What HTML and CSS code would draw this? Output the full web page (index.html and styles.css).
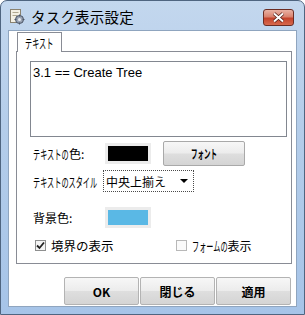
FILE: index.html
```html
<!DOCTYPE html>
<html lang="ja">
<head>
    <meta charset="UTF-8">
    <title>タスク表示設定</title>
    <link rel="stylesheet" href="styles.css">
</head>
<body>

<div class="window">
    <div class="titlebar">
        <svg class="app-icon" width="16" height="16" viewBox="0 0 16 16">
            <rect x="1.5" y="0.5" width="10" height="13" fill="#f4f0e4" stroke="#8a8270"/>
            <line x1="3.5" y1="3.5" x2="9.5" y2="3.5" stroke="#b0a890"/>
            <line x1="3.5" y1="6.5" x2="8.5" y2="6.5" stroke="#b0a890"/>
            <circle cx="10.5" cy="10.5" r="4" fill="#9aa4b4" stroke="#4a5466"/>
            <circle cx="10.5" cy="10.5" r="1.5" fill="#e8ecf2"/>
            <path d="M10.5 5.5v2M10.5 13.5v2M5.5 10.5h2M13.5 10.5h2" stroke="#4a5466"/>
        </svg>
        <span class="title">タスク表示設定</span>
        <div class="close-btn">
            <svg width="13" height="11" viewBox="0 0 13 11">
                <path d="M2 1.5L11 9.5M11 1.5L2 9.5" stroke="#4a1a14" stroke-width="3.4"/>
                <path d="M2 1.5L11 9.5M11 1.5L2 9.5" stroke="#fff" stroke-width="2"/>
            </svg>
        </div>
    </div>

    <div class="client">
        <div class="tabs">
            <div class="tab"><span class="hw hw4">テキスト</span></div>
        </div>
        <div class="panel">
            <div class="textbox">3.1 == Create Tree</div>

            <div class="row row-color">
                <span class="label"><span class="hw hw5">テキストの</span>色:</span>
                <span class="swatch swatch-black"></span>
                <button class="btn btn-font"><span class="hw hw-font">フォント</span></button>
            </div>

            <div class="row row-style">
                <span class="label label-style"><span class="hw hw9">テキストのスタイル</span></span>
                <div class="combo">
                    <span>中央上揃え</span>
                    <span class="arrow"></span>
                </div>
            </div>

            <div class="row row-bg">
                <span class="label">背景色:</span>
                <span class="swatch swatch-blue"></span>
            </div>

            <div class="row row-checks">
                <label class="check">
                    <span class="box">
                        <svg width="9" height="9" viewBox="0 0 9 9"><path d="M1 4.5L3.5 7L8 1.5" fill="none" stroke="#222" stroke-width="1.8"/></svg>
                    </span>
                    境界の表示
                </label>
                <label class="check check-form">
                    <span class="box box-empty"></span>
                    <span class="hw hw5">フォームの</span>表示
                </label>
            </div>
        </div>

        <div class="buttons">
            <button class="btn btn-main">OK</button>
            <button class="btn btn-main">閉じる</button>
            <button class="btn btn-main">適用</button>
        </div>
    </div>
</div>

</body>
</html>
```

FILE: styles.css
```css
body {
    margin: 0;
    font-family: "Noto Sans CJK JP", "Liberation Sans", sans-serif;
    font-size: 12px;
    color: #000;
    background: #fff;
}
/* half-width look for the katakana labels */
.hw {
    display: inline-block;
    white-space: nowrap;
    font-size: 13px;
    transform: scaleX(0.55);
    transform-origin: 0 50%;
}
.hw4 {
    width: 29px;
}
.hw5 {
    width: 36px;
}
.hw9 {
    width: 65px;
}
.hw-font {
    width: 26px;
    font-size: 12.5px;
    transform: scaleX(0.52);
}
.window {
    width: 305px;
    height: 315px;
    box-sizing: border-box;
    border: 1px solid #4f6580;
    border-radius: 7px 7px 0 0;
    background: linear-gradient(to bottom, #c3d7ee 0%, #b4cdea 40%, #a6c4e8 100%);
    padding: 0 7px 7px 7px;
    display: flex;
    flex-direction: column;
}
.titlebar {
    height: 29px;
    display: flex;
    align-items: flex-start;
}
.app-icon {
    margin: 8px 0 0 1px;
}
.title {
    margin: 5px 0 0 6px;
    font-size: 14.5px;
    color: #000;
    letter-spacing: 0.2px;
}
.close-btn {
    margin: 8px 3px 0 auto;
    width: 29px;
    height: 15px;
    border: 1px solid #6b2d24;
    border-radius: 3px;
    background: linear-gradient(to bottom, #e9b2a4 0%, #d9826e 45%, #c4432c 55%, #d76a4e 100%);
    display: flex;
    align-items: center;
    justify-content: center;
}
.client {
    flex: 1;
    box-sizing: border-box;
    border: 1px solid #8fa5bf;
    background: #fff;
    display: flex;
    flex-direction: column;
}
.tabs {
    display: flex;
    padding: 1px 0 0 8px;
}
.tab {
    width: 45px;
    height: 20px;
    box-sizing: border-box;
    border: 1px solid #898c95;
    border-bottom: none;
    background: #fff;
    padding-left: 7px;
    line-height: 19px;
    margin-bottom: -1px;
    position: relative;
    z-index: 1;
}
.panel {
    margin-left: 7px;
    width: 276px;
    height: 213px;
    box-sizing: border-box;
    border: 1px solid #898c95;
    padding: 9px 0 0 13px;
}
.textbox {
    width: 257px;
    height: 76px;
    box-sizing: border-box;
    border: 1px solid #828790;
    padding: 3px 2px;
    font-family: "Liberation Sans", sans-serif;
    font-size: 13px;
    line-height: 16px;
}
.row {
    display: flex;
    align-items: center;
    padding-left: 3px;
}
.row-color {
    margin-top: 4px;
    height: 25px;
}
.row-style {
    margin-top: 4px;
    height: 22px;
}
.row-bg {
    margin-top: 15px;
    height: 20px;
}
.row-checks {
    margin-top: 9px;
    padding-left: 5px;
}
.label {
    white-space: nowrap;
    width: 72px;
}
.label-style {
    width: 70px;
}
.swatch {
    display: inline-block;
    box-sizing: border-box;
    border: 3px solid #ececec;
}
.swatch-black {
    width: 46px;
    height: 21px;
    background: #000;
}
.swatch-blue {
    width: 46px;
    height: 21px;
    background: #5ab8e5;
}
.btn {
    font-family: "Noto Sans CJK JP", "Liberation Sans", sans-serif;
    font-size: 12px;
    color: #000;
    border: 1px solid #a9a9a9;
    border-radius: 2px;
    background: linear-gradient(to bottom, #f7f7f7 0%, #ececec 48%, #dedede 52%, #d4d4d4 100%);
    padding: 0;
    cursor: pointer;
}
.btn-font {
    margin-left: 12px;
    width: 82px;
    height: 25px;
    font-weight: bold;
}
.combo {
    width: 91px;
    height: 22px;
    box-sizing: border-box;
    border: 1px dotted #4a4a4a;
    display: flex;
    align-items: center;
    padding-left: 2px;
    font-size: 12px;
}
.arrow {
    margin-left: auto;
    margin-right: 5px;
    width: 0;
    height: 0;
    border-left: 4px solid transparent;
    border-right: 4px solid transparent;
    border-top: 4px solid #000;
}
.check {
    display: flex;
    align-items: center;
    font-size: 12.5px;
}
.check-form {
    margin-left: 62px;
    font-size: 12px;
}
.box {
    width: 11px;
    height: 11px;
    box-sizing: border-box;
    border: 1px solid #8e8f8f;
    background: #f4f4f4;
    margin-right: 5px;
    display: flex;
    align-items: center;
    justify-content: center;
}
.box-empty {
    border-color: #b8b8b8;
    background: #fafafa;
}
.buttons {
    display: flex;
    justify-content: flex-end;
    gap: 1px;
    margin-top: 13px;
    padding-right: 5px;
}
.btn-main {
    width: 75px;
    height: 28px;
    font-weight: bold;
    border-color: #b3b3b3;
}
```
